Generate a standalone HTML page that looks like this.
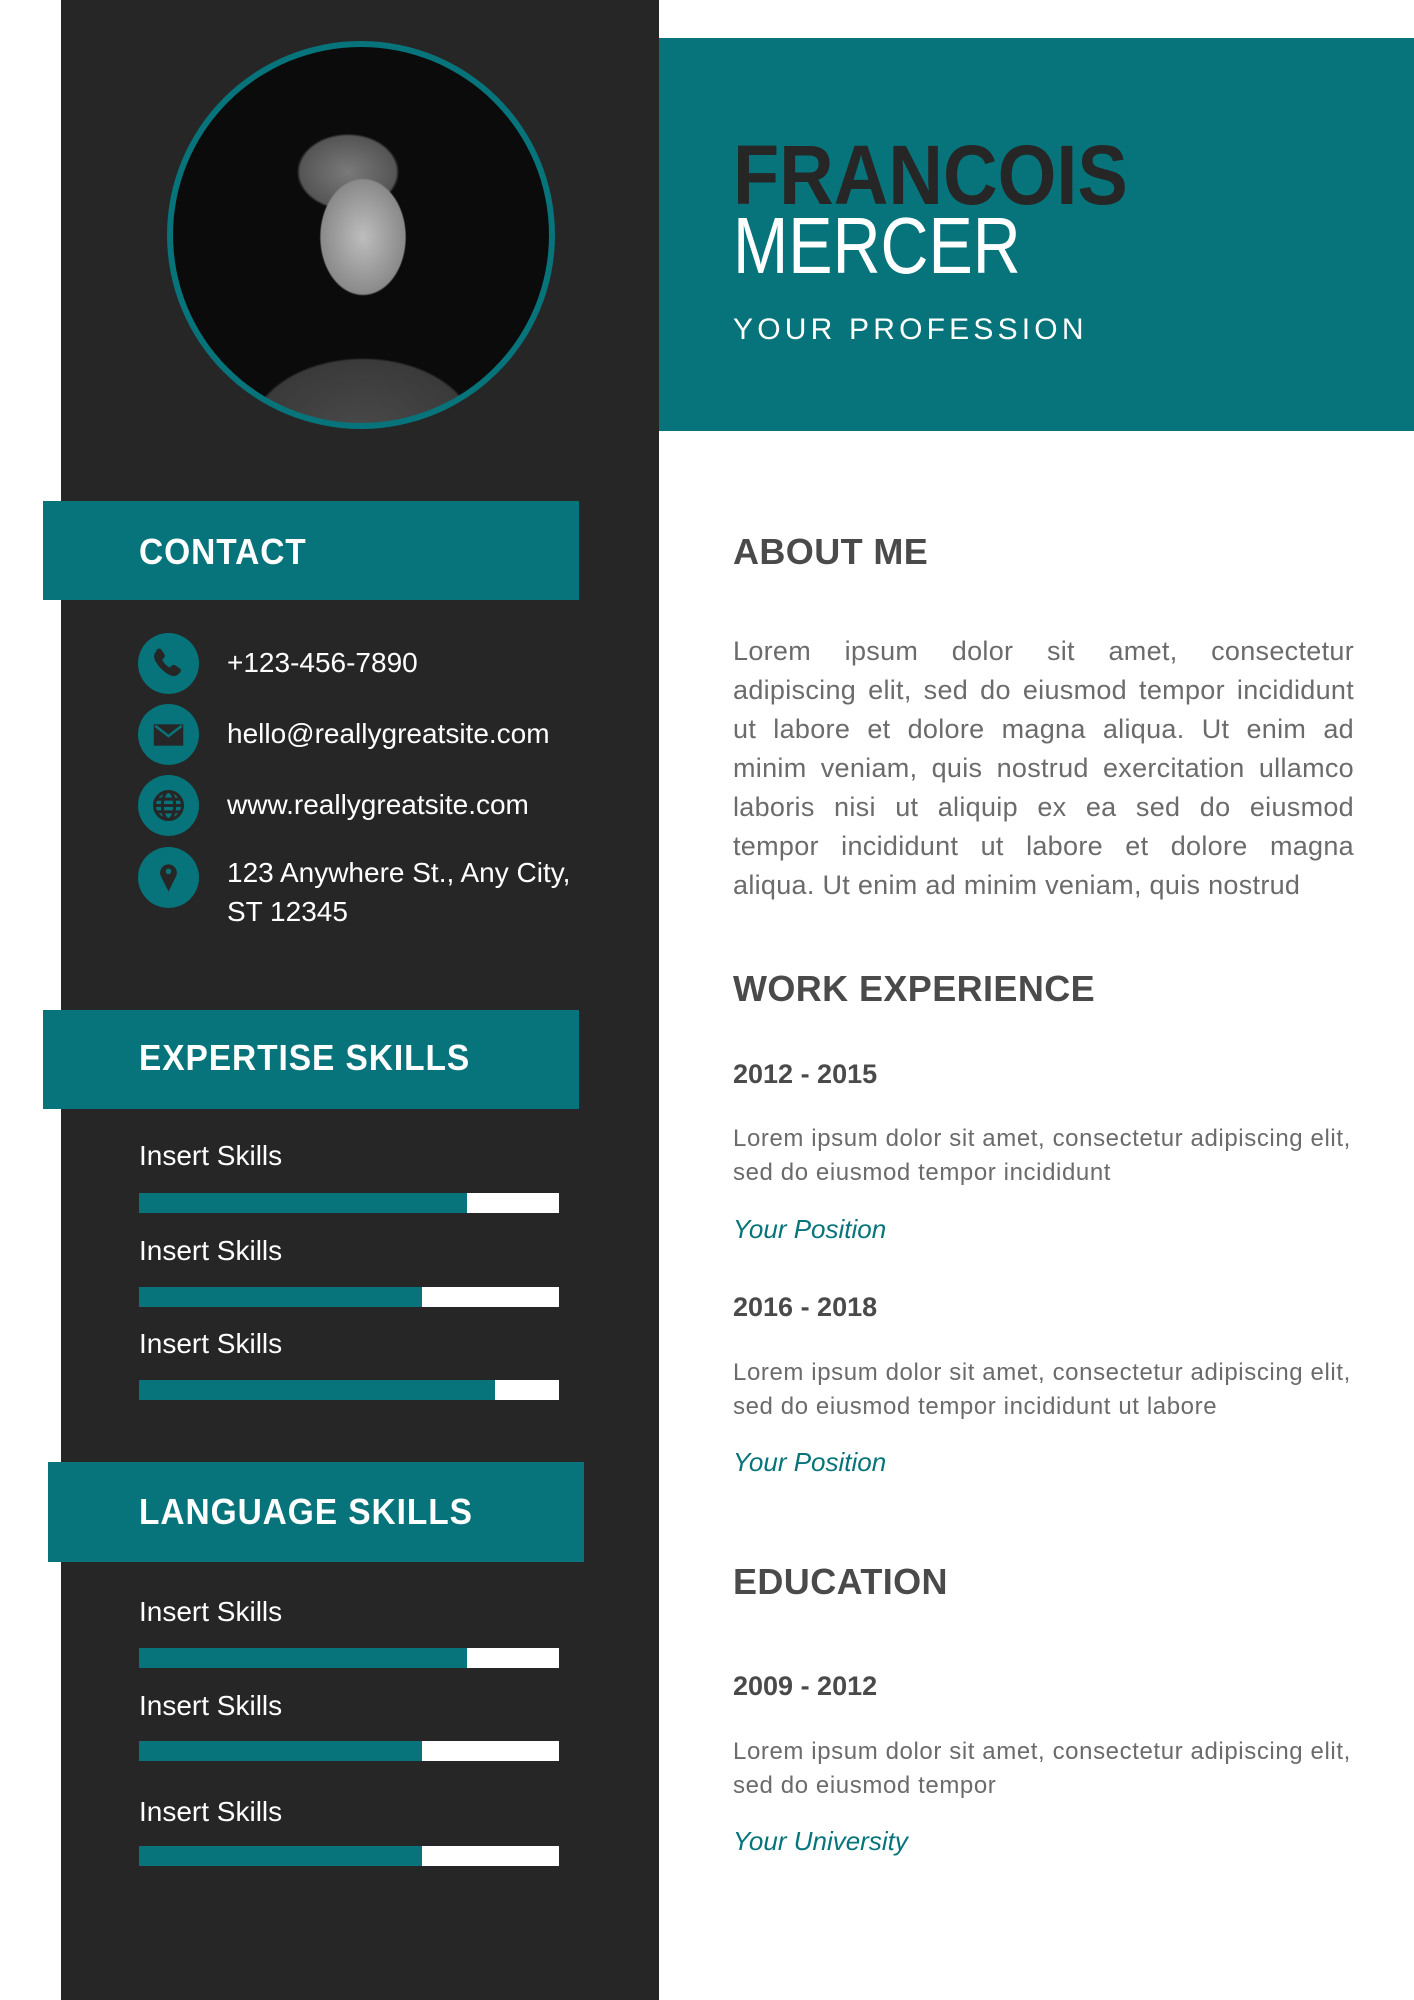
<!DOCTYPE html>
<html><head><meta charset="utf-8"><style>
*{margin:0;padding:0;box-sizing:border-box}
body{width:1414px;height:2000px;position:relative;background:#fff;font-family:"Liberation Sans",sans-serif;overflow:hidden}
.a{position:absolute;white-space:nowrap}
.side{left:61px;top:0;width:598px;height:2000px;background:#262626}
.hdr{left:659px;top:38px;width:755px;height:393px;background:#06747a}
.bar{background:#06747a}
.bt{color:#fff;font-weight:bold;font-size:36px;letter-spacing:1px;line-height:40px;transform:scaleX(.93);transform-origin:left}
.ic{width:61px;height:61px;border-radius:50%;background:#06747a;left:138px}
.ct{color:#fff;font-size:28px;left:227px;line-height:38px}
.sk{color:#fff;font-size:28px;left:139px;line-height:34px}
.tr{left:139px;width:420px;height:20px;background:#fff}
.tr i{display:block;height:100%;background:#06747a}
.h2{left:733px;color:#4a4a4a;font-weight:bold;font-size:36px;letter-spacing:.4px;line-height:40px}
.yr{left:733px;color:#4a4a4a;font-weight:bold;font-size:27px;line-height:34px}
.p{left:733px;color:#6b6b6b;font-size:24px;letter-spacing:.6px;line-height:34px}
.pos{left:733px;color:#06747a;font-style:italic;font-size:26px;line-height:34px}
.ab{left:733px;width:621px;color:#6b6b6b;font-size:27px;letter-spacing:.3px;line-height:39px}
.ab div{text-align:justify;text-align-last:justify;white-space:nowrap}
.ab div.l{text-align-last:left}
</style></head><body>
<div class="a side"></div>
<div class="a hdr"></div>
<div class="a" style="left:167px;top:41px;width:388px;height:388px;border-radius:50%;background:#06747a"></div>
<div class="a" style="left:173px;top:47px;width:376px;height:376px;border-radius:50%;overflow:hidden;background:radial-gradient(ellipse 70px 95px at 190px 190px,#bdbdbd 0%,#8a8a8a 60%,transparent 62%),radial-gradient(ellipse 80px 60px at 175px 125px,#7a7a7a 0%,#555 60%,transparent 64%),radial-gradient(ellipse 160px 110px at 190px 390px,#4a4a4a 0%,#3a3a3a 70%,transparent 72%),#0b0b0b"></div>
<div class="a" style="left:733px;top:132px;font-size:84px;font-weight:bold;color:#262626;line-height:86px;transform:scaleX(.9);transform-origin:left">FRANCOIS</div>
<div class="a" style="left:733px;top:203px;font-size:80px;color:#fff;line-height:86px;transform:scaleX(.83);transform-origin:left;font-weight:300">MERCER</div>
<div class="a" style="left:733px;top:313px;font-size:30px;color:#fff;letter-spacing:4.2px;line-height:34px">YOUR PROFESSION</div>

<div class="a bar" style="left:43px;top:501px;width:536px;height:99px"></div>
<div class="a bt" style="left:139px;top:532px">CONTACT</div>
<div class="a ic" style="top:633px"><svg width="61" height="61" viewBox="0 0 24 24"><path d="M7.5 6.5c.6-.6 1.3-.5 1.7.1l1.2 1.8c.3.5.2 1-.2 1.4l-.7.7c.6 1.3 1.7 2.5 3 3.1l.7-.7c.4-.4.9-.5 1.4-.2l1.8 1.2c.6.4.7 1.1.1 1.7l-.8.8c-.8.8-2.2.8-3.7-.1-2.1-1.2-3.8-3-5-5-.9-1.500-.9-2.900-.1-3.700z" fill="#262626"/></svg></div>
<div class="a ic" style="top:704px"><svg width="61" height="61" viewBox="0 0 24 24"><rect x="6.2" y="8" width="11.6" height="8.4" fill="#262626"/><path d="M6.8 8.6 12 12.6 17.2 8.6" stroke="#06747a" stroke-width="1" fill="none"/></svg></div>
<div class="a ic" style="top:775px"><svg width="61" height="61" viewBox="0 0 24 24"><g stroke="#262626" stroke-width="1.2" fill="none"><circle cx="12" cy="12" r="5.5"/><ellipse cx="12" cy="12" rx="2.4" ry="5.5"/><path d="M6.5 12h11M7.2 9.5h9.6M7.2 14.5h9.6"/></g></svg></div>
<div class="a ic" style="top:847px"><svg width="61" height="61" viewBox="0 0 24 24"><path d="M12 17.5 9 11.5a3.3 3.3 0 1 1 6 0z" fill="#262626"/><circle cx="12" cy="9.6" r="1.1" fill="#06747a"/></svg></div>
<div class="a ct" style="top:644px">+123-456-7890</div>
<div class="a ct" style="top:715px">hello@reallygreatsite.com</div>
<div class="a ct" style="top:786px">www.reallygreatsite.com</div>
<div class="a ct" style="top:854px">123 Anywhere St., Any City,</div>
<div class="a ct" style="top:893px">ST 12345</div>

<div class="a bar" style="left:43px;top:1010px;width:536px;height:99px"></div>
<div class="a bt" style="left:139px;top:1038px">EXPERTISE SKILLS</div>
<div class="a sk" style="top:1139px">Insert Skills</div>
<div class="a tr" style="top:1193px"><i style="width:328px"></i></div>
<div class="a sk" style="top:1234px">Insert Skills</div>
<div class="a tr" style="top:1287px"><i style="width:283px"></i></div>
<div class="a sk" style="top:1327px">Insert Skills</div>
<div class="a tr" style="top:1380px"><i style="width:356px"></i></div>

<div class="a bar" style="left:48px;top:1462px;width:536px;height:100px"></div>
<div class="a bt" style="left:139px;top:1492px">LANGUAGE SKILLS</div>
<div class="a sk" style="top:1595px">Insert Skills</div>
<div class="a tr" style="top:1648px"><i style="width:328px"></i></div>
<div class="a sk" style="top:1689px">Insert Skills</div>
<div class="a tr" style="top:1741px"><i style="width:283px"></i></div>
<div class="a sk" style="top:1795px">Insert Skills</div>
<div class="a tr" style="top:1846px"><i style="width:283px"></i></div>

<div class="a h2" style="top:532px">ABOUT ME</div>
<div class="a ab" style="top:632px">
<div>Lorem ipsum dolor sit amet, consectetur</div>
<div>adipiscing elit, sed do eiusmod tempor incididunt</div>
<div>ut labore et dolore magna aliqua. Ut enim ad</div>
<div>minim veniam, quis nostrud exercitation ullamco</div>
<div>laboris nisi ut aliquip ex ea sed do eiusmod</div>
<div>tempor incididunt ut labore et dolore magna</div>
<div class="l">aliqua. Ut enim ad minim veniam, quis nostrud</div>
</div>
<div class="a h2" style="top:969px">WORK EXPERIENCE</div>
<div class="a yr" style="top:1057px">2012 - 2015</div>
<div class="a p" style="top:1122px">Lorem ipsum dolor sit amet, consectetur adipiscing elit,<br>sed do eiusmod tempor incididunt</div>
<div class="a pos" style="top:1212px">Your Position</div>
<div class="a yr" style="top:1290px">2016 - 2018</div>
<div class="a p" style="top:1356px">Lorem ipsum dolor sit amet, consectetur adipiscing elit,<br>sed do eiusmod tempor incididunt ut labore</div>
<div class="a pos" style="top:1445px">Your Position</div>
<div class="a h2" style="top:1562px">EDUCATION</div>
<div class="a yr" style="top:1669px">2009 - 2012</div>
<div class="a p" style="top:1735px">Lorem ipsum dolor sit amet, consectetur adipiscing elit,<br>sed do eiusmod tempor</div>
<div class="a pos" style="top:1824px">Your University</div>
</body></html>
